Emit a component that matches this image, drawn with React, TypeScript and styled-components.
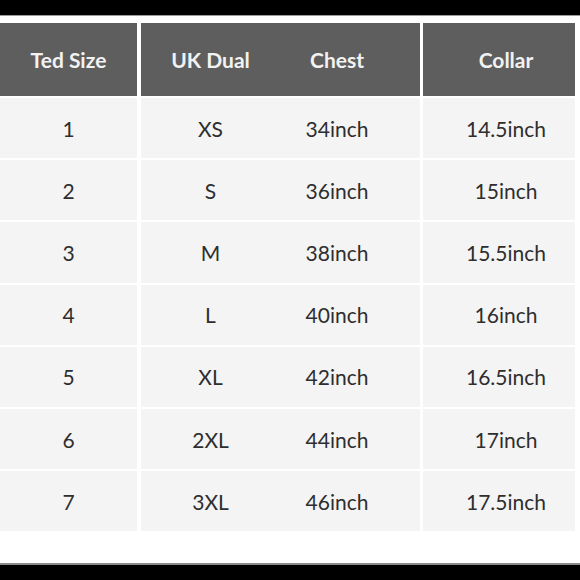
import React from "react";
import styled, { createGlobalStyle } from "styled-components";

const GlobalStyle = createGlobalStyle`
  html, body {
    margin: 0;
    padding: 0;
    background: #ffffff;
  }
  body {
    font-family: "Lato", "Open Sans", sans-serif;
  }
`;

const Page = styled.div`
  width: 580px;
  height: 580px;
  display: flex;
  flex-direction: column;
  background: #fff;
  overflow: hidden;
`;

const Bar = styled.div<{ $bottom?: boolean }>`
  height: 15px;
  background: #000;
  flex-shrink: 0;
  ${(p) => (p.$bottom ? "border-top: 2px solid #8a8a8a;" : "border-bottom: 1px solid #9a9a9a;")}
`;

const Table = styled.div`
  display: grid;
  grid-template-columns: 137px 279px 152px;
  column-gap: 3.5px;
  row-gap: 2px;
  grid-auto-rows: 60.2px;
  grid-template-rows: 73px;
  padding: 7px 5px 0 0;
  flex: 1;
`;

const Cell = styled.div<{ $head?: boolean; $shift?: number }>`
  display: flex;
  align-items: center;
  justify-content: center;
  background: ${(p) => (p.$head ? "#5e5e5e" : "#f4f4f4")};
  color: ${(p) => (p.$head ? "#f2f2f2" : "#2e2e2e")};
  font-size: 21px;
  font-weight: ${(p) => (p.$head ? 700 : 400)};
  padding-left: ${(p) => p.$shift ?? 0}px;
  box-sizing: border-box;
`;

const Split = styled(Cell)`
  display: grid;
  grid-template-columns: 140px 1fr;
  justify-items: center;
`;

const Sub = styled.span<{ $shift?: number }>`
  padding-right: ${(p) => p.$shift ?? 0}px;
`;

const rows = [
  ["1", "XS", "34inch", "14.5inch"],
  ["2", "S", "36inch", "15inch"],
  ["3", "M", "38inch", "15.5inch"],
  ["4", "L", "40inch", "16inch"],
  ["5", "XL", "42inch", "16.5inch"],
  ["6", "2XL", "44inch", "17inch"],
  ["7", "3XL", "46inch", "17.5inch"],
];

export default function App() {
  return (
    <Page>
      <GlobalStyle />
      <Bar />
      <Table>
        <Cell $head>Ted Size</Cell>
        <Split $head>
          <Sub>UK Dual</Sub>
          <Sub $shift={26}>Chest</Sub>
        </Split>
        <Cell $head $shift={14}>Collar</Cell>
        {rows.map((r) => (
          <React.Fragment key={r[0]}>
            <Cell>{r[0]}</Cell>
            <Split>
              <Sub>{r[1]}</Sub>
              <Sub $shift={26}>{r[2]}</Sub>
            </Split>
            <Cell $shift={14}>{r[3]}</Cell>
          </React.Fragment>
        ))}
      </Table>
      <Bar $bottom />
    </Page>
  );
}
